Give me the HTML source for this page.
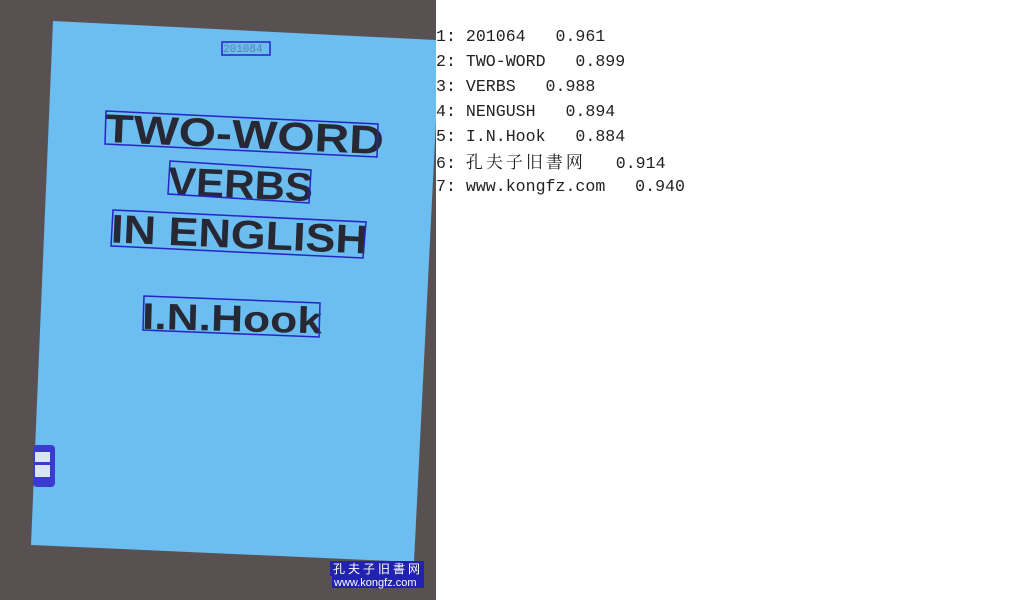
<!DOCTYPE html>
<html><head><meta charset="utf-8"><style>
html,body{margin:0;padding:0;background:#fff;width:1036px;height:600px;overflow:hidden;position:relative}
.l{position:absolute;left:436px;font-family:"Liberation Mono","Noto Serif CJK SC",monospace;font-size:16.6px;color:#222;white-space:pre;line-height:20px}
.cj{font-family:"Noto Serif CJK SC",serif;font-size:17px;letter-spacing:3px}
</style></head><body>
<svg width="436" height="600" style="position:absolute;left:0;top:0">
<rect width="436" height="600" fill="#595052"/>
<polygon points="53,21 436,40 436,120 414,562 31,545" fill="#6cbdf0"/>
<g font-family="Liberation Sans, sans-serif" font-weight="bold" fill="#272833">
<text x="104" y="148" font-size="40" textLength="280" lengthAdjust="spacingAndGlyphs" transform="rotate(2.5 243 135)">TWO-WORD</text>
<text x="168" y="198" font-size="40" textLength="145" lengthAdjust="spacingAndGlyphs" transform="rotate(2.5 240 185)">VERBS</text>
<text x="111" y="248" font-size="40" textLength="257" lengthAdjust="spacingAndGlyphs" transform="rotate(2.5 240 235)">IN ENGLISH</text>
<text x="142" y="331" font-size="37" textLength="180" lengthAdjust="spacingAndGlyphs" transform="rotate(1.5 230 320)">I.N.Hook</text>
</g>
<g fill="none" stroke="#2424c8" stroke-width="1.5">
<polygon points="106,111 378,124 377,157 105,144"/>
<polygon points="170,161 311,170 309,203 168,194"/>
<polygon points="113,210 366,222 363,258 111,246"/>
<polygon points="144,296 320,303 319,337 143,330"/>
<rect x="222" y="42" width="48" height="13"/>
</g>
<text x="223" y="52" font-family="Liberation Mono,monospace" font-size="11" fill="#5a80b0">201084</text>
<rect x="33" y="445" width="22" height="42" rx="4" fill="#3a3ad0"/>
<rect x="35" y="452" width="15" height="10" fill="#d8e4f8"/>
<rect x="35" y="465" width="15" height="12" fill="#d8e4f8"/>
<rect x="330" y="561" width="94" height="15" fill="#2222b0"/>
<rect x="332" y="576" width="92" height="12" fill="#2222b0"/>
<text x="333" y="573" font-family="Noto Sans CJK SC,sans-serif" font-size="12" fill="#fff" letter-spacing="3">孔夫子旧書网</text>
<text x="334" y="586" font-family="Liberation Sans,sans-serif" font-size="11" fill="#fff">www.kongfz.com</text>
</svg>
<div class="l" style="top:27px">1: 201064   0.961</div>
<div class="l" style="top:52px">2: TWO-WORD   0.899</div>
<div class="l" style="top:77px">3: VERBS   0.988</div>
<div class="l" style="top:102px">4: NENGUSH   0.894</div>
<div class="l" style="top:127px">5: I.N.Hook   0.884</div>
<div class="l" style="top:151px">6: <span class="cj">孔夫子旧書网</span>   0.914</div>
<div class="l" style="top:177px">7: www.kongfz.com   0.940</div>
</body></html>
